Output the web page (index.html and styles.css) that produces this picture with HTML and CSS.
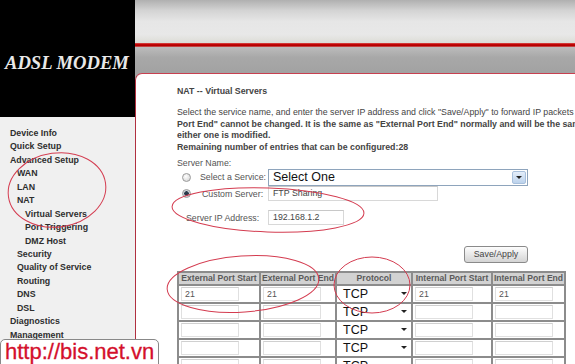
FILE: index.html
```html
<!DOCTYPE html>
<html lang="en">

<head>
  <meta charset="UTF-8" />
  <title>ADSL Modem - NAT Virtual Servers</title>
  <link rel="stylesheet" href="styles.css">
</head>

<body>
  <div class="page">
    <div class="side">
      <div class="brand">ADSL MODEM</div>
      <ul class="menu">
        <li>Device Info</li>
        <li>Quick Setup</li>
        <li>Advanced Setup</li>
        <li class="sub">WAN</li>
        <li class="sub">LAN</li>
        <li class="sub">NAT</li>
        <li class="sub2">Virtual Servers</li>
        <li class="sub2">Port Triggering</li>
        <li class="sub2">DMZ Host</li>
        <li class="sub">Security</li>
        <li class="sub">Quality of Service</li>
        <li class="sub">Routing</li>
        <li class="sub">DNS</li>
        <li class="sub">DSL</li>
        <li>Diagnostics</li>
        <li>Management</li>
      </ul>
    </div>

    <div class="right">
      <div class="banner">
        <div class="banner-top"></div>
        <div class="banner-line"></div>
        <div class="banner-bottom"></div>
      </div>

      <div class="main">
        <div class="title">NAT -- Virtual Servers</div>
        <p class="info">
          Select the service name, and enter the server IP address and click "Save/Apply" to forward IP packets for this service to the specified server. <b>NOTE: The "Internal</b><br>
          <b>Port End" cannot be changed. It is the same as "External Port End" normally and will be the same as the "Internal Port Start" or "External Port End" if</b><br>
          <b>either one is modified.</b><br>
          <b>Remaining number of entries that can be configured:28</b>
        </p>

        <div class="label">Server Name:</div>
        <div class="form-row row-select">
          <span class="radio"></span>
          <span class="row-label">Select a Service:</span>
          <div class="combo">
            <span>Select One</span>
            <span class="combo-btn"></span>
          </div>
        </div>
        <div class="form-row row-custom">
          <span class="radio checked"></span>
          <span class="row-label">Custom Server:</span>
          <div class="field field-wide">FTP Sharing</div>
        </div>
        <div class="form-row row-ip">
          <span class="row-label ip-label">Server IP Address:</span>
          <div class="field field-ip">192.168.1.2</div>
        </div>

        <div class="actions">
          <button class="save-btn">Save/Apply</button>
        </div>

        <table class="ports">
          <tr>
            <th class="c1">External Port Start</th>
            <th class="c2">External Port End</th>
            <th class="c3">Protocol</th>
            <th class="c4">Internal Port Start</th>
            <th class="c5">Internal Port End</th>
          </tr>
          <tr>
            <td><div class="cell-input">21</div></td>
            <td><div class="cell-input">21</div></td>
            <td><div class="proto">TCP<span class="arrow"></span></div></td>
            <td><div class="cell-input">21</div></td>
            <td><div class="cell-input">21</div></td>
          </tr>
          <tr>
            <td><div class="cell-input"></div></td>
            <td><div class="cell-input"></div></td>
            <td><div class="proto">TCP<span class="arrow"></span></div></td>
            <td><div class="cell-input"></div></td>
            <td><div class="cell-input"></div></td>
          </tr>
          <tr>
            <td><div class="cell-input"></div></td>
            <td><div class="cell-input"></div></td>
            <td><div class="proto">TCP<span class="arrow"></span></div></td>
            <td><div class="cell-input"></div></td>
            <td><div class="cell-input"></div></td>
          </tr>
          <tr>
            <td><div class="cell-input"></div></td>
            <td><div class="cell-input"></div></td>
            <td><div class="proto">TCP<span class="arrow"></span></div></td>
            <td><div class="cell-input"></div></td>
            <td><div class="cell-input"></div></td>
          </tr>
          <tr>
            <td><div class="cell-input"></div></td>
            <td><div class="cell-input"></div></td>
            <td><div class="proto">TCP<span class="arrow"></span></div></td>
            <td><div class="cell-input"></div></td>
            <td><div class="cell-input"></div></td>
          </tr>
        </table>
      </div>
    </div>
  </div>

  <!-- hand-drawn annotation circles -->
  <svg class="marks" width="575" height="364" viewBox="0 0 575 364">
    <ellipse cx="57" cy="190" rx="49" ry="37" transform="rotate(-8 57 190)" />
    <ellipse cx="268" cy="210" rx="96" ry="22" transform="rotate(2 268 210)" />
    <ellipse cx="243" cy="284" rx="76" ry="28" transform="rotate(-4 243 284)" />
    <ellipse cx="372" cy="285" rx="38" ry="28" />
  </svg>

  <div class="watermark">http://bis.net.vn</div>
</body>

</html>
```

FILE: styles.css
```css
:root {
  --red: #c40000;
  --menu-bg: #f0f0f0;
  --text: #333;
  --grid: #8c8c8c;
}

html,
body {
  margin: 0;
  padding: 0;
  overflow: hidden;
  height: 364px;
}

body {
  font-family: 'Liberation Sans', Arial, sans-serif;
  font-size: 8.8px;
  color: var(--text);
  background: #fff;
}

.page {
  display: flex;
  width: 575px;
  height: 364px;
}

.side {
  width: 135px;
  flex: none;
  background: var(--menu-bg);
}

.brand {
  height: 117px;
  background: #000;
  color: #e8e8e8;
  font-family: 'Liberation Serif', 'Times New Roman', serif;
  font-style: italic;
  font-weight: bold;
  font-size: 18.6px;
  line-height: 18px;
  padding: 54px 0 0 5px;
  box-sizing: border-box;
  white-space: nowrap;
}

.menu {
  list-style: none;
  margin: 0;
  padding: 10px 0 0 10px;
}

.menu li {
  font-weight: bold;
  line-height: 13.45px;
  height: 13.45px;
  white-space: nowrap;
  color: #2e2e2e;
}

.menu .sub {
  padding-left: 7px;
}

.menu .sub2 {
  padding-left: 15px;
}

.right {
  flex: 1;
  min-width: 0;
  display: flex;
  flex-direction: column;
  background: #a2a2a2;
}

.banner {
  height: 73px;
  flex: none;
}

.banner-top {
  height: 43px;
  background: linear-gradient(to bottom, #b0b0b0 0%, #d4d4d4 25%, #e6e6e6 50%, #e8e8e8 80%, #dcdcd6 100%);
}

.banner-line {
  height: 4px;
  background: linear-gradient(to bottom, #d85050, #c00000 40%, #b00000 70%, #d07070);
}

.banner-bottom {
  height: 26px;
  background: linear-gradient(to bottom, #bcbcbc 0%, #a8a8a8 40%, #a2a2a2 100%);
}

.main {
  flex: 1;
  background: #fff;
  border-top: 1px solid #c84050;
  border-left: 1px solid #b03040;
  border-top-left-radius: 7px;
  padding: 12px 0 0 41px;
  white-space: nowrap;
}

.title {
  font-weight: bold;
  line-height: 11px;
  color: #444;
}

.info {
  margin: 10px 0 0;
  line-height: 11.7px;
  color: #444;
}

.label {
  margin-top: 4px;
  line-height: 11px;
  color: #555;
}

.form-row {
  display: flex;
  align-items: center;
}

.row-select {
  margin-top: 0;
  height: 17px;
}

.row-custom {
  height: 16px;
}

.row-ip {
  margin-top: 8px;
  height: 16px;
}

.radio {
  width: 9px;
  height: 9px;
  border-radius: 50%;
  border: 1px solid #9a9a9a;
  background: radial-gradient(circle at 40% 35%, #fff, #cfcfcf);
  margin-left: 5px;
  flex: none;
  box-sizing: border-box;
}

.radio.checked {
  background: radial-gradient(circle, #2a3a4a 0 2px, #c8d0d8 2.5px, #e8e8e8);
}

.row-label {
  color: #555;
  margin-left: 9px;
  width: 68px;
  flex: none;
}

.row-custom .row-label {
  margin-left: 11px;
  width: 66px;
}

.ip-label {
  margin-left: 9px;
  width: 82px;
}

.combo {
  width: 260px;
  height: 17px;
  box-sizing: border-box;
  border: 1px solid #8ea4bc;
  display: flex;
  align-items: center;
  justify-content: space-between;
  padding-left: 4px;
  font-size: 12.5px;
  color: #111;
}

.combo-btn {
  width: 14px;
  height: 13px;
  margin-right: 1px;
  border: 1px solid #a8c0dc;
  border-radius: 2px;
  box-sizing: border-box;
  background: linear-gradient(to bottom, #e4eefa, #bcd2ec);
  position: relative;
}

.combo-btn::after {
  content: "";
  position: absolute;
  left: 3px;
  top: 4px;
  border-left: 3px solid transparent;
  border-right: 3px solid transparent;
  border-top: 3px solid #222;
}

.field {
  height: 15px;
  box-sizing: border-box;
  border: 1px solid #d8d8d8;
  border-top-color: #c8c8c8;
  padding-left: 4px;
  line-height: 13px;
  color: #444;
}

.field-wide {
  width: 170px;
}

.field-ip {
  width: 76px;
}

.actions {
  width: 351px;
  display: flex;
  justify-content: flex-end;
  margin-top: 20px;
}

.save-btn {
  width: 64px;
  height: 17px;
  padding: 0;
  font-family: inherit;
  font-size: 8.8px;
  color: #444;
  border: 1px solid #8a8a8a;
  border-radius: 3px;
  background: linear-gradient(to bottom, #fdfdfd, #e4e4e4 60%, #d4d4d4);
}

.ports {
  margin-top: 8px;
  border-collapse: collapse;
  border: 2px solid var(--grid);
  table-layout: fixed;
}

.ports th,
.ports td {
  border: 2px solid var(--grid);
  padding: 0;
  height: 16px;
  vertical-align: middle;
}

.ports th {
  background: #d2d2d2;
  color: #5a5a5a;
  font-weight: bold;
  font-size: 8.6px;
  height: 11px;
  line-height: 11px;
  overflow: hidden;
  white-space: nowrap;
}

.c1 { width: 80px; }
.c2 { width: 74px; }
.c3 { width: 74px; }
.c4 { width: 78px; }
.c5 { width: 71px; }

.cell-input {
  width: 58px;
  height: 14px;
  margin-left: 2px;
  box-sizing: border-box;
  border: 1px solid #e0e0e0;
  border-top-color: #d0d0d0;
  line-height: 12px;
  padding-left: 3px;
  color: #555;
}

.proto {
  display: flex;
  align-items: center;
  justify-content: space-between;
  font-size: 12.5px;
  line-height: 14px;
  color: #111;
  padding: 0 4px 0 6px;
  height: 14px;
}

.arrow {
  border-left: 3px solid transparent;
  border-right: 3px solid transparent;
  border-top: 3px solid #222;
}

.marks {
  position: absolute;
  left: 0;
  top: 0;
  pointer-events: none;
}

.marks ellipse {
  fill: none;
  stroke: #d43c50;
  stroke-width: 1;
}

.watermark {
  position: absolute;
  left: 0;
  top: 339px;
  width: 153px;
  height: 30px;
  padding-left: 4px;
  background: #fff;
  border: 1px solid #888;
  border-radius: 5px;
  color: #d4102c;
  font-family: 'Liberation Sans', Arial, sans-serif;
  font-size: 22px;
  line-height: 24px;
  -webkit-text-stroke: 0.3px #d4102c;
  white-space: nowrap;
}
```
